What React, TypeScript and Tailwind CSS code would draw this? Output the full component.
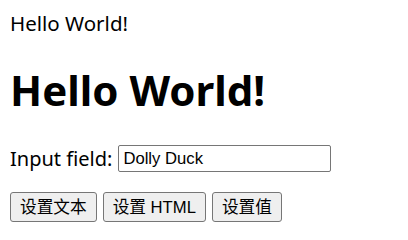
import React from 'react';

const sans = "font-['Noto_Sans','Noto_Sans_CJK_SC',sans-serif]";
const ui = "font-['Liberation_Sans','Noto_Sans_CJK_SC',sans-serif]";

const App: React.FC = () => {
  return (
    <div className={`min-h-screen bg-white text-black px-[10px] pt-[10px] ${sans}`}>
      <div className="text-[20.5px] leading-[27px]">Hello World!</div>

      <h1 className="mt-[26px] mb-[27px] text-[42px] leading-[54px] font-bold">Hello World!</h1>

      <p className="flex items-center h-[29px] text-[20px]">
        <span className="mr-[6px]">Input field:</span>
        <input
          type="text"
          defaultValue="Dolly Duck"
          className={`w-[213px] h-[27px] px-[4px] border border-[#767676] rounded-[2px] text-[16.67px] outline-none ${ui}`}
        />
      </p>

      <div className="flex gap-[6px] mt-[19px]">
        {['设置文本', '设置 HTML', '设置值'].map((label) => (
          <button
            key={label}
            className={`h-[30px] px-[9px] bg-[#efefef] border border-[#767676] rounded-[3px] text-[16.67px] ${ui}`}
          >
            {label}
          </button>
        ))}
      </div>
    </div>
  );
};

export default App;
